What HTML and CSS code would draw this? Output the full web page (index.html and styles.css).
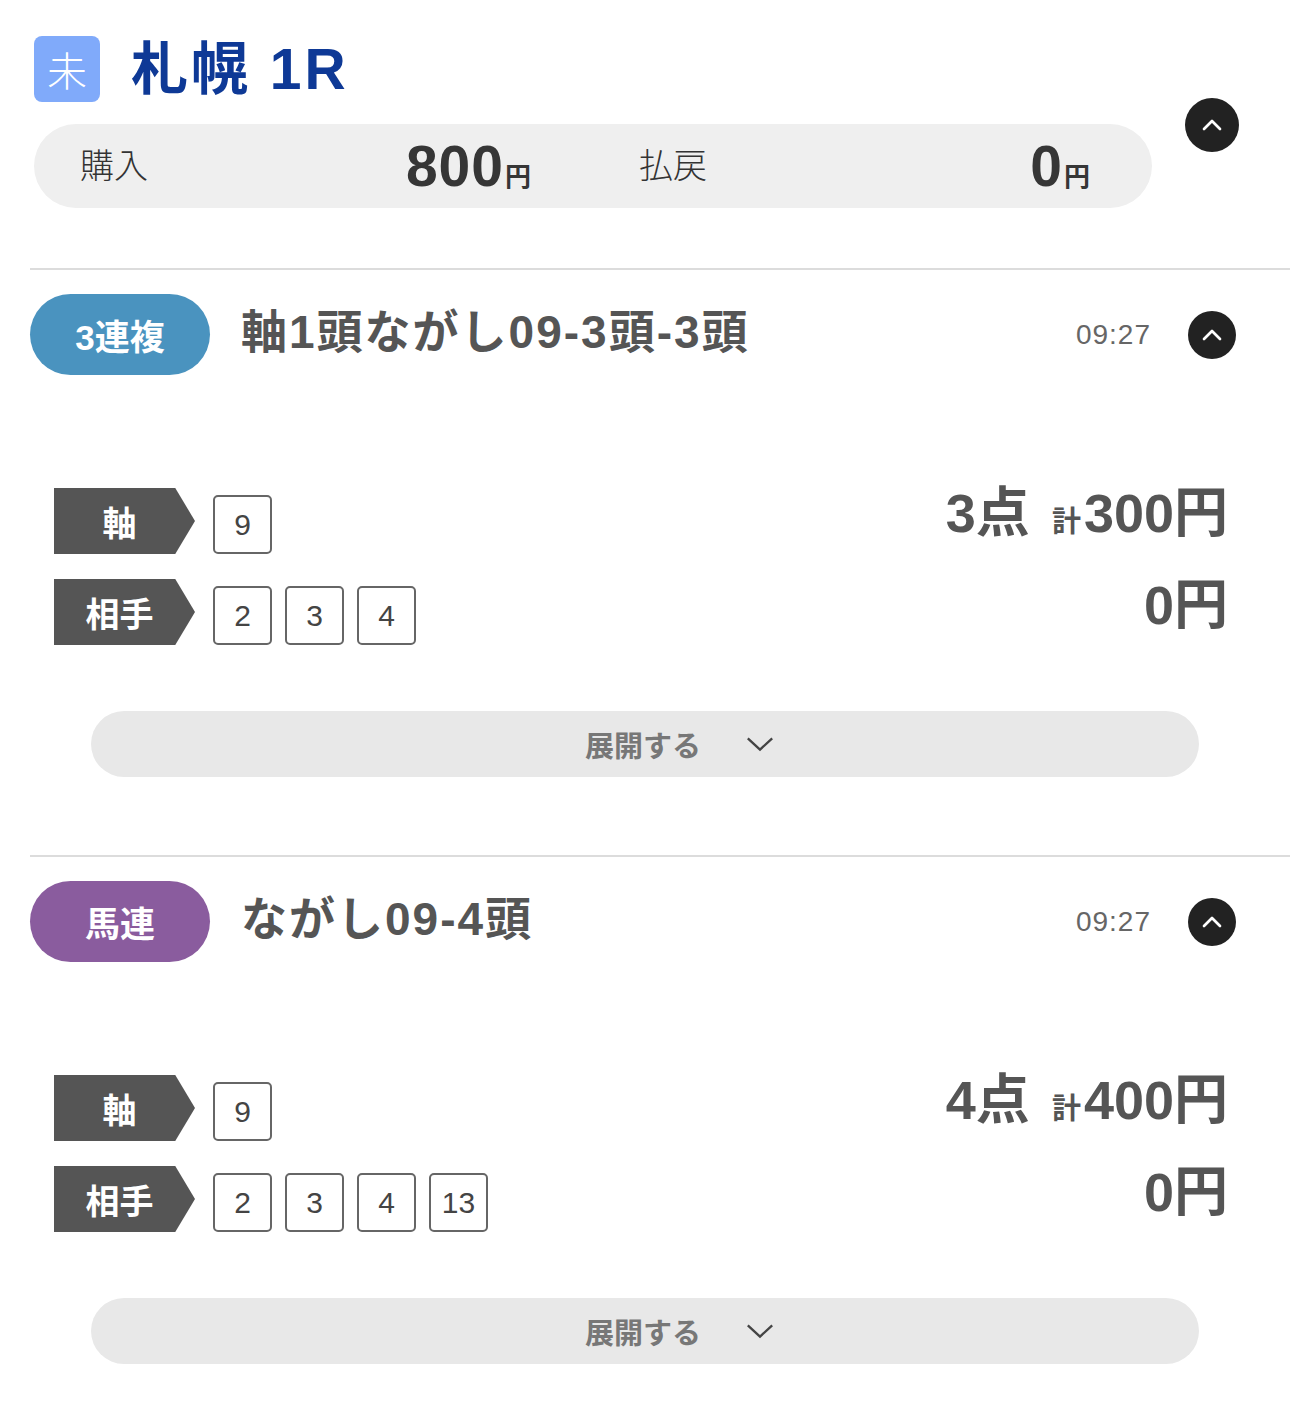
FILE: index.html
```html
<!DOCTYPE html>
<html lang="ja">
  <head>
    <meta charset="UTF-8" />
    <title>札幌 1R</title>
    <link rel="stylesheet" href="styles.css">
  </head>
  <body>
    <header class="race-head">
      <div class="race-main">
        <div class="race-title">
          <span class="status">未</span>
          <h1>札幌 1R</h1>
        </div>
        <div class="summary">
          <div class="summary-item">
            <span class="summary-label">購入</span>
            <span class="summary-value">800<small>円</small></span>
          </div>
          <div class="summary-item">
            <span class="summary-label">払戻</span>
            <span class="summary-value">0<small>円</small></span>
          </div>
        </div>
      </div>
      <button class="round-btn big" aria-label="閉じる">
        <svg viewBox="0 0 24 24"><polyline points="6,15 12,9 18,15" /></svg>
      </button>
    </header>

    <section class="ticket">
      <div class="ticket-head">
        <span class="bet-type trio">3連複</span>
        <h2 class="ticket-title">軸1頭ながし09-3頭-3頭</h2>
        <span class="ticket-time">09:27</span>
        <button class="round-btn" aria-label="閉じる">
          <svg viewBox="0 0 24 24"><polyline points="6,15 12,9 18,15" /></svg>
        </button>
      </div>
      <div class="ticket-body">
        <div class="legs">
          <div class="leg">
            <span class="leg-label">軸</span>
            <span class="num">9</span>
          </div>
          <div class="leg">
            <span class="leg-label">相手</span>
            <span class="num">2</span>
            <span class="num">3</span>
            <span class="num">4</span>
          </div>
        </div>
        <div class="amounts">
          <div class="amount-line"><span class="points">3点</span><span class="kei">計</span>300円</div>
          <div class="amount-line">0円</div>
        </div>
      </div>
      <button class="expand">展開する
        <svg viewBox="0 0 32 20"><polyline points="3,4 16,16 29,4" /></svg>
      </button>
    </section>

    <section class="ticket">
      <div class="ticket-head">
        <span class="bet-type quinella">馬連</span>
        <h2 class="ticket-title">ながし09-4頭</h2>
        <span class="ticket-time">09:27</span>
        <button class="round-btn" aria-label="閉じる">
          <svg viewBox="0 0 24 24"><polyline points="6,15 12,9 18,15" /></svg>
        </button>
      </div>
      <div class="ticket-body">
        <div class="legs">
          <div class="leg">
            <span class="leg-label">軸</span>
            <span class="num">9</span>
          </div>
          <div class="leg">
            <span class="leg-label">相手</span>
            <span class="num">2</span>
            <span class="num">3</span>
            <span class="num">4</span>
            <span class="num">13</span>
          </div>
        </div>
        <div class="amounts">
          <div class="amount-line"><span class="points">4点</span><span class="kei">計</span>400円</div>
          <div class="amount-line">0円</div>
        </div>
      </div>
      <button class="expand">展開する
        <svg viewBox="0 0 32 20"><polyline points="3,4 16,16 29,4" /></svg>
      </button>
    </section>
  </body>
</html>
```

FILE: styles.css
```css
/* Base */
:root {
  --text-dark: #444;
  --text-mid: #555;
  --text-light: #777;
  --line-color: #dcdcdc;
  --title-blue: #0e3996;
  --font-family: "Liberation Sans", "Noto Sans CJK JP", sans-serif;
}

body {
  margin: 0;
  font-family: var(--font-family);
  color: var(--text-dark);
  background: #fff;
}

button {
  font-family: inherit;
  border: none;
  cursor: pointer;
}

/* Race header */
.race-head {
  display: flex;
  align-items: center;
  gap: 33px;
  padding: 36px 0 0 34px;
}

.race-main {
  width: 1118px;
}

.race-title {
  display: flex;
  align-items: center;
  gap: 31px;
  height: 66px;
}

.status {
  width: 66px;
  height: 66px;
  border-radius: 8px;
  background-color: #80aafa;
  color: #fff;
  font-size: 40px;
  font-weight: 300;
  display: flex;
  align-items: center;
  justify-content: center;
}

.race-title h1 {
  margin: 0;
  font-size: 57px;
  line-height: 1;
  font-weight: 700;
  color: var(--title-blue);
  letter-spacing: 3px;
}

.summary {
  display: grid;
  grid-template-columns: 1fr 1fr;
  height: 84px;
  margin-top: 22px;
  border-radius: 42px;
  background-color: #efefef;
}

.summary-item {
  display: flex;
  align-items: center;
  justify-content: space-between;
  padding: 0 62px 0 46px;
}

.summary-label {
  font-size: 34px;
  line-height: 1;
  font-weight: 300;
  color: #333;
}

.summary-value {
  font-size: 57px;
  font-weight: 700;
  color: #363636;
  line-height: 1;
  letter-spacing: 1px;
}

.summary-value small {
  font-size: 26px;
  margin-left: 1px;
  letter-spacing: 0;
}

.round-btn {
  width: 48px;
  height: 48px;
  border-radius: 50%;
  background-color: #222;
  padding: 0;
  display: flex;
  align-items: center;
  justify-content: center;
  flex-shrink: 0;
}

.round-btn.big {
  width: 54px;
  height: 54px;
  margin-top: 6px;
}

.round-btn svg {
  width: 32px;
  height: 32px;
  fill: none;
  stroke: #fff;
  stroke-width: 2;
  stroke-linecap: round;
  stroke-linejoin: round;
}

/* Tickets */
.ticket {
  margin-left: 30px;
  border-top: 2px solid var(--line-color);
  padding-top: 24px;
  padding-bottom: 78px;
}

.race-head + .ticket {
  margin-top: 60px;
}

.ticket-head {
  display: flex;
  align-items: center;
  padding-right: 54px;
}

.bet-type {
  width: 180px;
  height: 81px;
  border-radius: 41px;
  color: #fff;
  font-size: 35px;
  font-weight: 700;
  display: flex;
  align-items: center;
  justify-content: center;
  flex-shrink: 0;
}

.bet-type.trio {
  background-color: #4a93bf;
}

.bet-type.quinella {
  background-color: #8a5c9e;
}

.ticket-title {
  flex: 1;
  margin: 0 0 0 31px;
  font-size: 46px;
  line-height: 1;
  font-weight: 700;
  color: var(--text-mid);
  letter-spacing: 2px;
  padding-bottom: 6px;
}

.ticket-time {
  font-size: 28px;
  letter-spacing: 1px;
  color: #666;
  margin-right: 37px;
}

.ticket-body {
  display: flex;
  justify-content: space-between;
  align-items: flex-start;
  padding: 113px 62px 0 24px;
}

.legs {
  display: flex;
  flex-direction: column;
  gap: 25px;
}

.leg {
  display: flex;
  align-items: flex-end;
  gap: 13px;
}

.leg-label {
  width: 141px;
  height: 66px;
  margin-right: 5px;
  background-color: #555;
  color: #fff;
  font-size: 34px;
  font-weight: 700;
  display: flex;
  align-items: center;
  justify-content: center;
  padding-right: 10px;
  box-sizing: border-box;
  clip-path: polygon(0 0, 86% 0, 100% 50%, 86% 100%, 0 100%);
}

.num {
  width: 59px;
  height: 59px;
  box-sizing: border-box;
  border: 2px solid #666;
  border-radius: 5px;
  font-size: 30px;
  color: #444;
  display: flex;
  align-items: center;
  justify-content: center;
}

.amounts {
  display: flex;
  flex-direction: column;
  align-items: flex-end;
  gap: 33px;
  color: var(--text-mid);
}

.amount-line {
  font-size: 54px;
  font-weight: 700;
  line-height: 50px;
}

.points {
  margin-right: 22px;
}

.kei {
  font-size: 29px;
  margin-right: 3px;
}

.expand {
  display: flex;
  align-items: center;
  justify-content: center;
  gap: 44px;
  width: 1108px;
  height: 66px;
  margin: 66px 0 0 61px;
  border-radius: 33px;
  background-color: #e8e8e8;
  color: var(--text-light);
  font-size: 29px;
  font-weight: 700;
  padding: 0 0 0 70px;
}

.expand svg {
  width: 30px;
  height: 20px;
  fill: none;
  stroke: #444;
  stroke-width: 2.5;
}
```
